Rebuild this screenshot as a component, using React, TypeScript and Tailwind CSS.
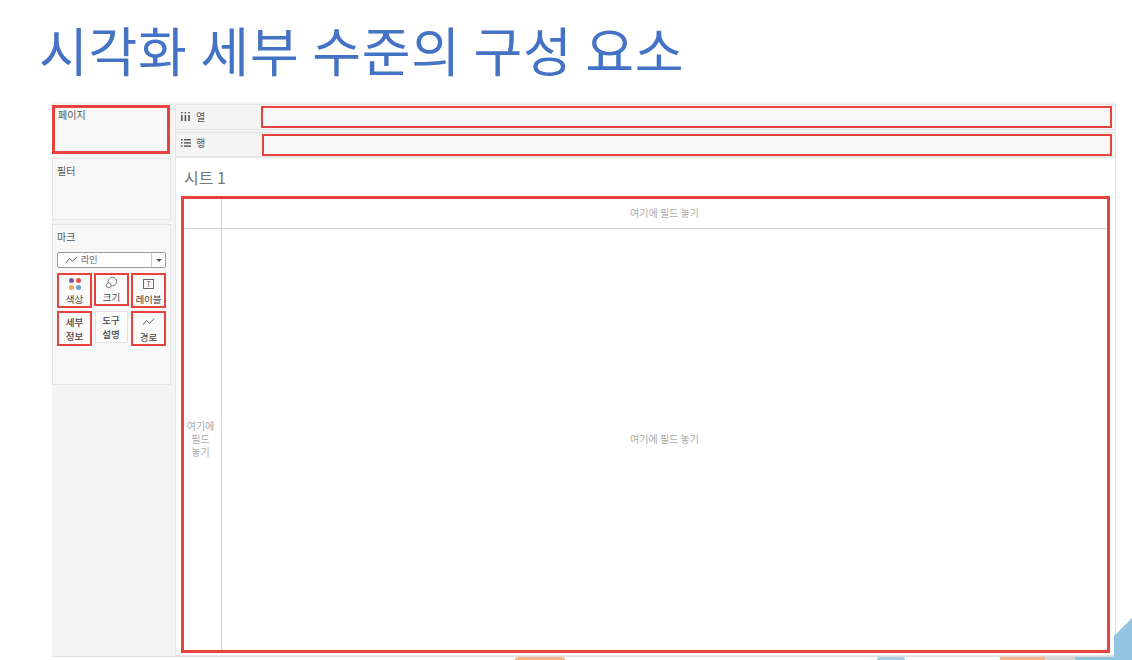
const font = { fontFamily: '"Noto Sans CJK KR", sans-serif' };

const Squiggle = ({ className = "" }: { className?: string }) => (
  <svg viewBox="0 0 14 10" className={className} fill="none" stroke="#555" strokeWidth="1">
    <path d="M1 8 L5 3.5 L8 6.5 L13 1.5" />
  </svg>
);

const MarkButton = ({
  label,
  icon,
  red = true,
  className = "",
}: {
  label: React.ReactNode;
  icon?: React.ReactNode;
  red?: boolean;
  className?: string;
}) => (
  <div
    className={`flex flex-col items-center justify-center bg-[#fbfbfb] text-[9.5px] leading-[14px] text-[#444] text-center ${
      red ? "border-[2px] border-[#e8423c]" : "border border-[#e4e4e4]"
    } ${className}`}
  >
    {icon && <div className="h-[17px] flex items-center justify-center">{icon}</div>}
    <div>{label}</div>
  </div>
);

const ColumnsIcon = () => (
  <svg viewBox="0 0 9 9" className="w-[9px] h-[9px]" fill="#555">
    <rect x="0" y="0" width="1.6" height="1.4" />
    <rect x="0" y="3" width="1.6" height="6" />
    <rect x="3.6" y="0" width="1.6" height="1.4" />
    <rect x="3.6" y="3" width="1.6" height="6" />
    <rect x="7.2" y="0" width="1.6" height="1.4" />
    <rect x="7.2" y="3" width="1.6" height="6" />
  </svg>
);

const RowsIcon = () => (
  <svg viewBox="0 0 10 8" className="w-[10px] h-[8px]" fill="#555">
    <rect x="0" y="0" width="1.6" height="1.4" />
    <rect x="3" y="0" width="7" height="1.4" />
    <rect x="0" y="3.2" width="1.6" height="1.4" />
    <rect x="3" y="3.2" width="7" height="1.4" />
    <rect x="0" y="6.4" width="1.6" height="1.4" />
    <rect x="3" y="6.4" width="7" height="1.4" />
  </svg>
);

export default function App() {
  return (
    <div className="relative w-[1132px] h-[660px] overflow-hidden bg-white" style={font}>
      <h1 className="pl-[39px] pt-[11px] h-[102px] text-[53px] leading-[76px] font-normal text-[#4472c4] tracking-[0.8px]">
        시각화 세부 수준의 구성 요소
      </h1>

      <div className="ml-[52px] w-[1064px] h-[555px] flex gap-[4px] bg-[#f4f4f4] border-b border-[#dddddd]">
        {/* left column */}
        <div className="w-[119px] flex flex-col pt-[3px] gap-[4px]">
          <div className="h-[49px] w-[118px] border-[3px] border-[#e8423c] bg-[#f8f8f8] pl-[3px] text-[10px] leading-[14px] text-[#555]">
            페이지
          </div>
          <div className="h-[62px] border border-[#e4e4e4] bg-[#f8f8f8] pl-[4px] pt-[5px] text-[10px] leading-[14px] text-[#555]">
            필터
          </div>
          <div className="h-[161px] border border-[#e4e4e4] bg-[#f8f8f8] px-[4px] pt-[5px]">
            <div className="text-[10px] leading-[14px] text-[#555]">마크</div>
            <div className="mt-[8px] h-[16px] w-[109px] flex items-center border border-[#999] rounded-[2px] bg-white text-[9px] text-[#666]">
              <Squiggle className="ml-[7px] w-[13px] h-[10px]" />
              <span className="ml-[3px] flex-1">라인</span>
              <div className="w-[14px] h-full border-l border-[#ccc] flex items-center justify-center">
                <div className="w-0 h-0 border-l-[3px] border-r-[3px] border-t-[3px] border-l-transparent border-r-transparent border-t-[#555]" />
              </div>
            </div>
            <div className="mt-[5px] flex justify-between w-[109px]">
              <MarkButton
                className="w-[35px] h-[35px]"
                label="색상"
                icon={
                  <div className="grid grid-cols-2 gap-[2px]">
                    <span className="w-[5px] h-[5px] rounded-full bg-[#7a5c9e]" />
                    <span className="w-[5px] h-[5px] rounded-full bg-[#e8534f]" />
                    <span className="w-[5px] h-[5px] rounded-full bg-[#f0a35e]" />
                    <span className="w-[5px] h-[5px] rounded-full bg-[#6f9fd0]" />
                  </div>
                }
              />
              <MarkButton
                className="w-[35px] h-[33px]"
                label="크기"
                icon={
                  <svg viewBox="0 0 14 14" className="w-[13px] h-[13px]" fill="none" stroke="#666" strokeWidth="0.9">
                    <circle cx="8" cy="6" r="4.6" />
                    <circle cx="4" cy="10" r="2.6" fill="#fbfbfb" />
                  </svg>
                }
              />
              <MarkButton
                className="w-[35px] h-[35px]"
                label="레이블"
                icon={
                  <div className="w-[11px] h-[10px] border border-[#666] text-[7px] leading-[8px] text-center text-[#555]">
                    T
                  </div>
                }
              />
            </div>
            <div className="mt-[3px] flex justify-between w-[109px]">
              <MarkButton className="w-[35px] h-[35px] font-medium" label={<>세부<br />정보</>} />
              <MarkButton className="w-[33px] h-[32px] font-medium mr-[1px]" red={false} label={<>도구<br />설명</>} />
              <MarkButton
                className="w-[35px] h-[35px]"
                label="경로"
                icon={<Squiggle className="w-[13px] h-[10px]" />}
              />
            </div>
          </div>
        </div>

        {/* right column */}
        <div className="flex-1 flex flex-col pt-[2px]">
          <div className="h-[26px] flex bg-[#f4f4f4] border border-[#e6e6e6]">
            <div className="w-[85px] flex items-center pl-[5px] pb-[2px] gap-[6px] text-[10px] text-[#555]">
              <ColumnsIcon />
              <span>열</span>
            </div>
            <div className="flex-1 mt-[1px] mb-[1px] mr-[3px] border-[2px] border-[#e8423c] bg-[#f8f8f8]" />
          </div>
          <div className="h-[25px] mt-[2px] flex bg-[#f4f4f4] border border-[#e6e6e6]">
            <div className="w-[86px] flex items-center pl-[5px] pb-[4px] gap-[5px] text-[10px] text-[#555]">
              <RowsIcon />
              <span>행</span>
            </div>
            <div className="flex-1 mt-[1px] mr-[3px] border-[2px] border-[#e8423c] bg-[#f8f8f8]" />
          </div>
          <div className="flex-1 flex flex-col bg-white border border-[#e6e6e6] px-[5px] pb-[2px]">
            <div className="h-[38px] pl-[3px] pt-[8px] text-[16px] leading-[22px] text-[#777]">시트 1</div>
            <div className="flex-1 grid grid-cols-[38px_1fr] grid-rows-[30px_1fr] border-[3px] border-[#e8423c] text-[10px] text-[#aaa]">
              <div className="border-r border-b border-[#d4d4d4]" />
              <div className="border-b border-[#d4d4d4] pb-[2px] flex items-center justify-center">여기에 필드 놓기</div>
              <div className="border-r border-[#d4d4d4] pr-[4px] pb-[3px] flex items-center justify-center text-center leading-[13px]">
                <span>여기에<br />필드<br />놓기</span>
              </div>
              <div className="pb-[3px] flex items-center justify-center">여기에 필드 놓기</div>
            </div>
          </div>
        </div>
      </div>

      {/* background art peeking out below the slide capture */}
      <svg className="absolute right-0 bottom-0 w-[18px] h-[42px]" viewBox="0 0 18 42">
        <path d="M0 42 L0 18 L18 0 L18 42 Z" fill="#92c5e0" />
      </svg>
      <div className="absolute left-[515px] bottom-0 w-[50px] h-[3px] rounded-t-full bg-[#f9b48c]" />
      <div className="absolute left-[877px] bottom-0 w-[28px] h-[3px] rounded-t-full bg-[#a9cfe6]" />
      <div className="absolute left-[1000px] bottom-0 w-[45px] h-[3px] bg-[#f9b48c]" />
      <div className="absolute left-[1045px] bottom-0 w-[30px] h-[3px] bg-[#d6d6d6]" />
      <div className="absolute left-[1075px] bottom-0 w-[40px] h-[3px] bg-[#92c5e0]" />
    </div>
  );
}
